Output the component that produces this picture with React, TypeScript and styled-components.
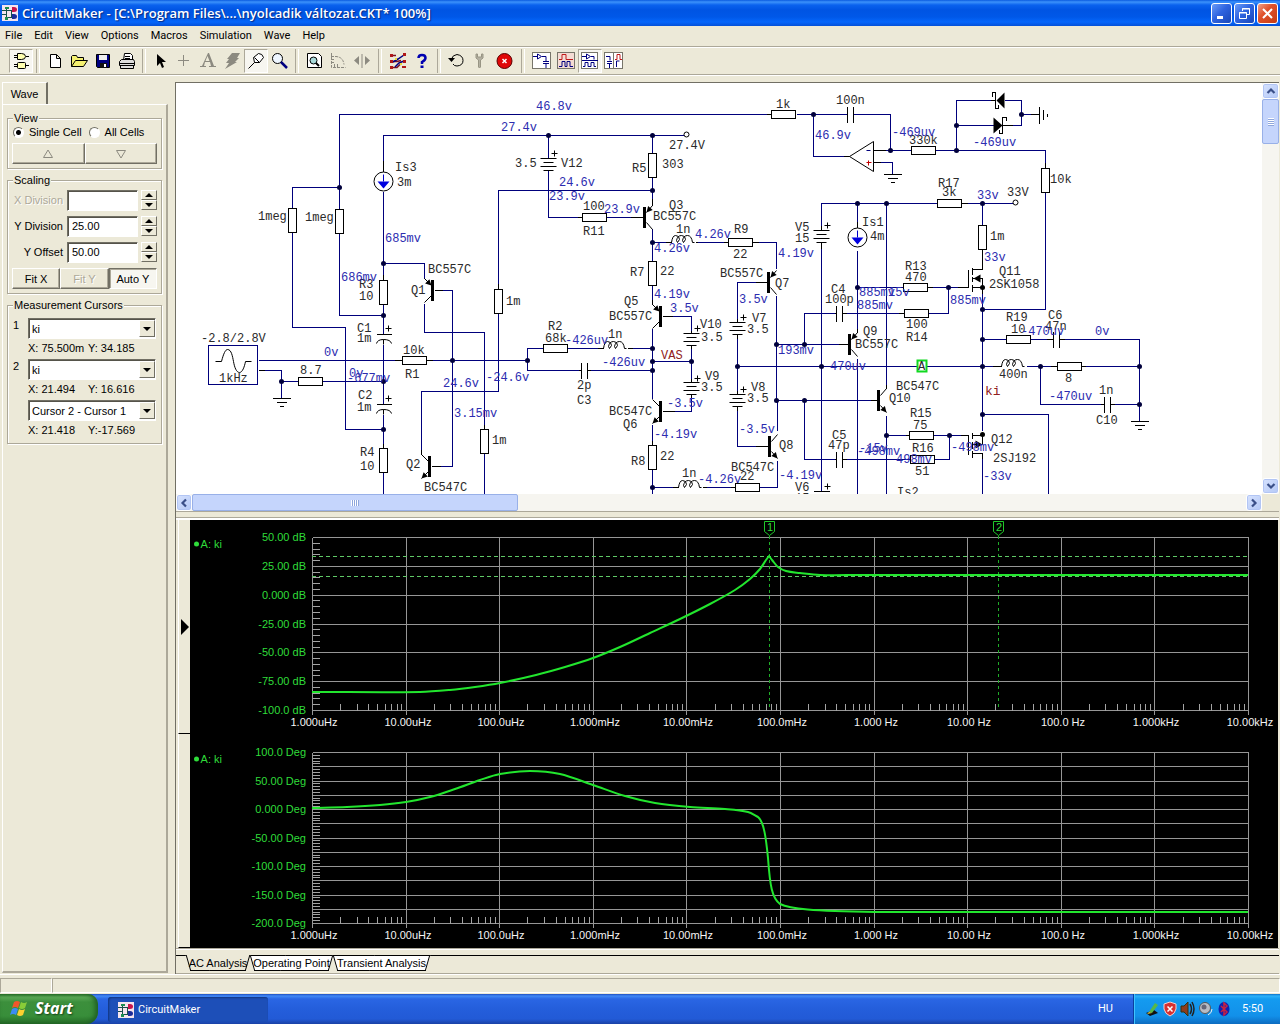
import React, { useState } from "react";
import styled, { createGlobalStyle } from "styled-components";

const ui = `"Liberation Sans", Arial, sans-serif`;
const menuFont = `Roboto, "Liberation Sans", sans-serif`;
const face = "#ece9d8";
const shade = "#aca899";
const dark = "#716f64";

const GlobalStyle = createGlobalStyle`
  * { box-sizing: border-box; }
  body { margin: 0; background: ${face}; font: 11px/14px ${ui}; color: #000; }
  button, input, select { font: inherit; color: inherit; margin: 0; }
  svg { display: block; }
`;

const Desktop = styled.div`
  display: flex;
  flex-direction: column;
  min-height: 100vh;
  background: ${face};
`;

/* ---------- title bar ---------- */

const TitleBar = styled.header`
  display: flex;
  align-items: center;
  gap: 4px;
  height: 26px;
  padding: 0 2px;
  background: linear-gradient(#0a5be0 0, #3c92fb 2px, #0a62ee 5px, #0054e3 10px, #0058e8 17px, #0566fb 22px, #0450d8 26px);
`;

const Title = styled.h1`
  flex: 1;
  margin: 0;
  font: 600 13px/20px "Open Sans", "Noto Sans", sans-serif;
  color: #fff;
  text-shadow: 1px 1px 1px #0a2a80;
  white-space: nowrap;
  overflow: hidden;
`;

const WindowButtons = styled.div`
  display: flex;
  gap: 2px;
`;

const WindowButton = styled.button<{ $close?: boolean }>`
  display: grid;
  place-items: center;
  width: 21px;
  height: 21px;
  padding: 0;
  border: 1px solid #fff;
  border-radius: 3px;
  background: ${(p) =>
    p.$close
      ? "linear-gradient(135deg, #f0a088, #e0512b 40%, #c53c14)"
      : "linear-gradient(135deg, #6a9cf8, #2f64e0 45%, #1846b8)"};
`;

/* ---------- menu and tool bar ---------- */

const MenuBar = styled.nav`
  display: flex;
  height: 20px;
  gap: 12px;
  padding: 0 5px;
`;

const MenuItem = styled.button`
  padding: 0;
  border: 0;
  background: none;
  font: 11px/18px ${menuFont};
`;

const ToolBar = styled.div`
  display: flex;
  align-items: center;
  height: 30px;
  padding-left: 9px;
  border-top: 1px solid ${shade};
  border-bottom: 1px solid #fff;
  box-shadow: inset 0 1px #fff, inset 0 -1px ${shade};
`;

const ToolButton = styled.button<{ $pressed?: boolean }>`
  width: 24px;
  height: 24px;
  padding: 0;
  border: 1px solid transparent;
  background: none;
  ${(p) => p.$pressed && `border-color: ${shade} #fff #fff ${shade}; background: #f7f6f0;`}
  svg { margin: -1px; }
`;

const ToolSeparator = styled.span<{ $space: number }>`
  display: flex;
  justify-content: center;
  width: ${(p) => p.$space}px;
  height: 24px;
  &::before {
    content: "";
    width: 2px;
    border-left: 1px solid ${shade};
    border-right: 1px solid #fff;
  }
`;

/* ---------- side panel ---------- */

const Main = styled.main`
  display: flex;
  flex: 1;
  gap: 7px;
  padding: 6px 1px 0 2px;
`;

const SidePanel = styled.aside`
  display: flex;
  flex-direction: column;
  flex: 0 0 166px;
  padding-bottom: 1px;
`;

const PanelTab = styled.button`
  align-self: flex-start;
  width: 46px;
  height: 22px;
  padding: 0;
  border: 0;
  border-top: 1px solid #fff;
  border-left: 1px solid #fff;
  border-right: 2px solid ${dark};
  background: ${face};
`;

const PanelBody = styled.div`
  flex: 1;
  padding: 6px 4px;
  border: 1px solid #fff;
  border-right: 2px solid ${shade};
  border-bottom: 2px solid ${shade};
`;

const Group = styled.fieldset`
  margin: 0 0 4px;
  padding: 0 4px 4px;
  border: 1px solid ${shade};
  box-shadow: 1px 1px #fff, inset 1px 1px #fff;
  min-width: 0;
`;

const Legend = styled.legend`
  margin-left: 1px;
  padding: 0 1px;
  background: ${face};
`;

const RadioRow = styled.div`
  display: flex;
  gap: 6px;
  height: 14px;
  margin-bottom: 4px;
  line-height: 12px;
`;

const RadioLabel = styled.label`
  display: flex;
  align-items: center;
  gap: 5px;
`;

const Radio = styled.input`
  appearance: none;
  width: 11px;
  height: 11px;
  margin-left: 1px;
  border: 1px solid;
  border-color: ${dark} #fff #fff ${dark};
  border-radius: 50%;
  background: #fff;
  &:checked { background: radial-gradient(#000 2px, #fff 3px); }
`;

const ButtonRow = styled.div`
  display: flex;
`;

const PushButton = styled.button<{ $down?: boolean }>`
  flex: 1;
  display: grid;
  place-items: center;
  height: 21px;
  padding: 0;
  border: 1px solid;
  border-color: ${(p) => (p.$down ? `${dark} #fff #fff ${dark}` : `#fff ${dark} ${dark} #fff`)};
  background: ${(p) => (p.$down ? "#f7f6f0" : face)};
  box-shadow: ${(p) => (p.$down ? `inset 1px 1px ${shade}` : `inset -1px -1px ${shade}`)};
  &:disabled { color: ${shade}; text-shadow: 1px 1px #fff; }
`;

const FieldRow = styled.div`
  display: grid;
  grid-template-columns: 1fr 71px 16px;
  column-gap: 3px;
  align-items: center;
  height: 22px;
  margin-bottom: 4px;
`;

const FieldLabel = styled.label<{ $off?: boolean }>`
  text-align: right;
  padding-right: 1px;
  white-space: nowrap;
  ${(p) => p.$off && `color: ${shade}; text-shadow: 1px 1px #fff;`}
`;

const NumberBox = styled.input`
  width: 100%;
  height: 21px;
  padding: 0 4px;
  border: 1px solid;
  border-color: ${dark} #fff #fff ${dark};
  box-shadow: inset 1px 1px #55534a;
  background: #fff;
`;

const Spinner = styled.div`
  display: flex;
  flex-direction: column;
`;

const SpinButton = styled.button`
  display: grid;
  place-items: center;
  height: 10px;
  padding: 0;
  border: 1px solid;
  border-color: #fff ${dark} ${dark} #fff;
  background: ${face};
`;

const Scaling = styled.div`
  padding-top: 2px;
  ${ButtonRow} { margin-top: 5px; }
`;

const CursorBlock = styled.div`
  display: grid;
  grid-template-columns: 15px 1fr;
  row-gap: 2px;
  padding: 6px 1px 0 1px;
  line-height: 14px;
`;

const Combo = styled.div`
  position: relative;
  height: 21px;
`;

const ComboSelect = styled.select`
  appearance: none;
  width: 100%;
  height: 21px;
  padding: 0 16px 0 3px;
  border: 1px solid;
  border-color: ${dark} #fff #fff ${dark};
  border-radius: 0;
  box-shadow: inset 1px 1px #55534a;
  background: #fff;
`;

const ComboArrow = styled.span`
  position: absolute;
  top: 2px;
  right: 1px;
  display: grid;
  place-items: center;
  width: 16px;
  height: 17px;
  border: 1px solid;
  border-color: #fff ${dark} ${dark} #fff;
  background: ${face};
  pointer-events: none;
`;

const Reading = styled.output`
  grid-column: 2;
  display: grid;
  grid-template-columns: 60px 1fr;
  margin-bottom: 2px;
  white-space: nowrap;
`;

/* ---------- work area ---------- */

const WorkArea = styled.section`
  display: flex;
  flex-direction: column;
  flex: 1;
  min-width: 0;
  border-left: 1px solid ${dark};
  border-top: 1px solid ${dark};
`;

const SchematicPane = styled.div`
  display: grid;
  grid-template-columns: minmax(0, 1fr) 17px;
  grid-template-rows: minmax(0, 1fr) 17px;
  flex: 1 1 0;
  min-height: 300px;
  background: ${face};
`;

const Sheet = styled.div`
  overflow: hidden;
  background: #fff;
  contain: size;
`;

const ScrollTrack = styled.div<{ $vertical?: boolean }>`
  display: flex;
  flex-direction: ${(p) => (p.$vertical ? "column" : "row")};
  background: #f6f5f0;
`;

const ScrollButton = styled.button`
  display: grid;
  place-items: center;
  flex: 0 0 16px;
  min-width: 16px;
  min-height: 16px;
  padding: 0;
  border: 1px solid #fff;
  border-radius: 3px;
  background: linear-gradient(135deg, #d6e2fe, #b4c8f6);
  box-shadow: inset 0 0 0 1px #b2c5f4;
`;

const ScrollThumb = styled.div<{ $size: string }>`
  display: grid;
  place-items: center;
  flex: 0 0 ${(p) => p.$size};
  border: 1px solid #98b0e8;
  border-radius: 2px;
  background: #c5d5fc;
`;

const ScrollSpace = styled.div`
  flex: 1;
`;

const Splitter = styled.div`
  height: 9px;
  border-top: 1px solid ${shade};
  border-bottom: 2px solid #fff;
  box-shadow: inset 0 -1px ${shade};
`;

const PlotPane = styled.div`
  display: flex;
  margin: 0 1px 0 2px;
  background: #000;
`;

const PlotGutter = styled.div`
  display: grid;
  grid-template-rows: 1fr 1fr;
  flex: 0 0 12px;
  background: ${face};
`;

const GutterCell = styled.div`
  display: grid;
  place-items: center;
  border-bottom: 1px solid #000;
  border-left: 1px solid #fff;
`;

const PlotView = styled.div`
  flex: 1;
  min-width: 0;
  svg { width: 100%; height: auto; }
`;

const SheetTabs = styled.div`
  display: flex;
  height: 26px;
  padding-top: 1px;
  border-bottom: 1px solid ${shade};
  background: linear-gradient(${shade} 1px, #fff 1px, #fff 2px, transparent 2px);
`;

const TabLine = styled.div`
  display: flex;
  flex: 1;
  margin-top: 6px;
  padding-left: 10px;
  border-top: 1px solid #000;
`;

const SheetTab = styled.button<{ $active?: boolean; $width: number }>`
  position: relative;
  width: ${(p) => p.$width}px;
  height: 16px;
  margin-top: -1px;
  padding: 0;
  border: 0;
  background: none;
  white-space: nowrap;
  z-index: ${(p) => (p.$active ? 2 : 1)};
  &::before, &::after {
    content: "";
    position: absolute;
    z-index: -1;
    top: 0;
    bottom: 0;
    border: 0 solid #000;
    border-bottom-width: 1px;
    border-top-width: ${(p) => (p.$active ? 0 : 1)}px;
    background: ${(p) => (p.$active ? face : "#fff")};
  }
  &::before {
    left: 2px;
    right: 40%;
    border-left-width: 1px;
    transform: skewX(16deg);
  }
  &::after {
    left: 40%;
    right: 2px;
    border-right-width: 1px;
    transform: skewX(-16deg);
  }
`;

const StatusBar = styled.footer`
  display: grid;
  grid-template-columns: 52px 1fr;
  height: 20px;
  padding: 3px 0 1px;
  border-top: 1px solid #fff;
`;

const StatusCell = styled.div`
  border: 1px solid;
  border-color: ${shade} #fff #fff ${shade};
`;

/* ---------- task bar ---------- */

const TaskBar = styled.div`
  display: flex;
  align-items: stretch;
  height: 30px;
  background: linear-gradient(#1f4fc0 0, #4189f5 2px, #2a66e4 5px, #245edb 15px, #225ad6 25px, #1941a5 30px);
  color: #fff;
  font: 11px/14px ${menuFont};
`;

const StartButton = styled.button`
  display: flex;
  align-items: center;
  gap: 5px;
  width: 98px;
  padding: 0 0 2px 10px;
  border: 0;
  border-radius: 0 10px 12px 0;
  background: linear-gradient(#2c7a2c 0, #5dac58 3px, #3c8f3c 8px, #388e3a 22px, #256b27 30px);
  box-shadow: inset -3px 0 5px #1f5f22;
  color: #fff;
  font: italic 700 16px/24px "Open Sans", "Noto Sans", sans-serif;
  text-shadow: 1px 1px 2px #123f14;
`;

const TaskButton = styled.button`
  display: flex;
  align-items: center;
  gap: 4px;
  width: 160px;
  height: 25px;
  margin: 3px 0 0 10px;
  padding: 0 10px;
  border: 0;
  border-radius: 3px;
  background: #1d4fb8;
  box-shadow: inset 1px 1px 2px #123580;
  color: #fff;
`;

const Language = styled.span`
  margin: 8px 20px 0 auto;
`;

const Tray = styled.div`
  display: flex;
  align-items: center;
  gap: 2px;
  width: 147px;
  padding-left: 10px;
  border-left: 1px solid #0b3f9f;
  background: linear-gradient(#0e70c8 0, #2cb2fa 2px, #149bf0 5px, #1290e9 22px, #0d6cc0 30px);
  box-shadow: inset 1px 0 #3fc4ff;
`;

const Clock = styled.time`
  margin-left: 8px;
`;

/* ---------- schematic drawing ---------- */

type P = [number, number];

const WIRES = `
M339 209V114H766 M292 208V187H339 M292 232V327H345V429H383 M339 233V315H383
M383 160V135H683 M383 191V274 M383 304V334 M383 344V404 M383 414V443 M383 472V494
M383 263H424V278 M424 303V332H484V424 M484 453V494 M442 290H452V466H440
M421 449V391H498V313 M498 283V190H652 M258 360H394 M432 360H527 M264 370H281V397 M281 381H298 M322 381H383
M652 135V153 M652 177V198 M652 228V261 M652 285V299 M652 328V398 M652 424V440 M652 469V494
M548 135V158 M548 170V217H577 M606 217H630
M652 242H665 M697 242H723 M758 242H776V268 M776 295V400 M777 400V430 M777 460V487H759
M755 282H737V318 M737 338V390 M737 410V446H755
M672 316H691V330 M691 348V378 M691 398V411H674 M652 361H691
M543 348H527V370H578 M567 348H597 M632 348H652 M590 370H652 M652 487H672 M706 487H730
M796 114H847 M853 114H890V150 M813 114V156H843 M885 150H911 M935 150H1045V162 M1045 192V309H982
M880 162H892V174 M956 150V100H990 M1004 100H1021V125H1012 M956 125H993 M1021 114H1030
M821 225V203H937 M967 203H1012 M821 248V491 M857 203V221 M857 250V328 M857 358V494
M886 203V384 M886 415V494 M857 287H903 M932 287H957 M948 287V313H928
M804 344V313H834 M846 313H898 M776 344H838 M737 366H992 M1026 366H1050 M1085 366H1139
M776 400H870 M804 400V459H834 M846 459H910 M934 459H949V435 M886 435H905 M933 435H960
M982 203V225 M982 293V430 M982 458V494 M982 414H1048V494
M982 339H1006 M1030 339H1046 M1064 339H1139V421 M1040 366V404H1100 M1114 404H1139`;

const LEADS = `
M766 114H771 M383 160V171 M383 274V280 M383 443V448 M484 424V429 M434 290H442 M431 466H440 M421 449V454
M498 283V289 M394 360H402 M426 360H432 M258 370H264 M652 198V205 M577 217H582 M630 217H643
M665 242H671 M695 242H697 M723 242H728 M752 242H758 M755 282H767 M755 446H768 M737 318V322 M737 334V338 M737 390V394 M737 406V410
M662 316H672 M662 411H674 M691 330V333 M691 345V348 M691 378V382 M691 394V398 M652 299V304 M652 440V445
M597 348H603 M627 348H632 M578 370H581 M587 370H590 M672 487H678 M702 487H706 M730 487H735
M843 156H849 M873 150H885 M873 162H880 M1045 162V168 M990 100H995 M1002 125H1012 M1030 114H1039
M821 225V230 M821 242V248 M857 221V227 M961 203H967 M857 328V332 M886 384V388 M927 287H932 M957 287H968
M834 313H836 M842 313H846 M898 313H904 M838 344H848 M992 366H1001 M1050 366H1057 M1081 366H1085
M870 400H877 M834 459H836 M842 459H846 M905 435H909 M960 435H968 M982 249V269H972 M982 287V293
M1046 339H1053 M1059 339H1064 M1100 404H1104 M1110 404H1114
M272 398H290 M276 402H286 M279 406H283 M883 174H901 M887 178H897 M890 182H894
M1130 421H1148 M1134 425H1144 M1137 429H1141 M1039 106V123 M1043 109V119 M1047 113V116
M376 334H391 M376 404H391 M581 362V378 M587 362V378 M847 106V122 M853 106V122
M836 305V321 M842 305V321 M836 451V467 M842 451V467 M1053 331V347 M1059 331V347 M1104 396V412 M1110 396V412
M813 491H829
M968 269V287 M972 267V274 M972 276V281 M972 284V291 M972 278H982V287H972
M968 435V454 M972 432V438 M972 441V448 M972 450V457 M972 435H982V444H972 M972 453H982V458
M992 96V92H995V108H998V104 M1006 120V117H1002V133H999V129`;

const V_RESISTORS: P[] = [
  [292, 208], [339, 209], [383, 280], [383, 448], [484, 429], [498, 289], [652, 153],
  [652, 261], [652, 445], [1045, 168], [982, 225],
];

const H_RESISTORS: P[] = [
  [402, 360], [298, 381], [582, 217], [728, 242], [543, 348], [735, 487], [771, 114],
  [911, 150], [937, 203], [903, 287], [904, 313], [1006, 339], [1057, 366], [909, 435], [910, 459],
];

const DOTS: P[] = [
  [339, 187], [383, 263], [383, 315], [383, 381], [383, 429], [281, 381], [452, 360], [527, 360],
  [548, 135], [652, 135], [652, 190], [652, 242], [652, 348], [652, 361], [652, 370], [652, 487],
  [691, 361], [737, 366], [776, 344], [776, 400], [804, 344], [804, 400], [821, 366], [813, 114],
  [890, 150], [956, 125], [956, 150], [1021, 114], [857, 203], [886, 203], [982, 203], [857, 287],
  [948, 287], [982, 309], [982, 339], [982, 366], [982, 414], [1040, 366], [1139, 366], [1139, 404],
  [886, 435], [949, 435],
];

const PLUSES: P[] = [
  [388, 328], [388, 398], [554, 153], [697, 328], [697, 378], [743, 317], [743, 389], [827, 225], [827, 486],
];

const BATTERIES: P[] = [[548, 158], [691, 333], [691, 382], [737, 322], [737, 394], [821, 230]];
const COILS: P[] = [[671, 242], [603, 348], [678, 487], [1001, 366]];

const TRANSISTORS: { x: number; y: number; out: number; pnp?: boolean }[] = [
  { x: 431, y: 280, out: 424, pnp: true },
  { x: 428, y: 456, out: 421 },
  { x: 643, y: 207, out: 652, pnp: true },
  { x: 659, y: 306, out: 652, pnp: true },
  { x: 659, y: 401, out: 652 },
  { x: 767, y: 272, out: 776, pnp: true },
  { x: 768, y: 436, out: 777 },
  { x: 848, y: 334, out: 857, pnp: true },
  { x: 877, y: 390, out: 886 },
];

type Label = [string, number, number];

const VOLTAGES: Label[] = [
  ["46.8v", 536, 110], ["27.4v", 501, 131], ["685mv", 385, 242], ["686mv", 341, 281], ["24.6v", 559, 186],
  ["23.9v", 549, 200], ["23.9v", 604, 213], ["4.26v", 654, 252], ["4.26v", 695, 238], ["4.19v", 778, 257],
  ["4.19v", 654, 298], ["3.5v", 739, 303], ["3.5v", 670, 312], ["-426uv", 565, 344], ["-426uv", 602, 366],
  ["-3.5v", 667, 407], ["-4.19v", 654, 438], ["-4.26v", 698, 483], ["-3.5v", 739, 433], ["0v", 324, 356],
  ["0v", 349, 377], ["-677mv", 347, 382], ["24.6v", 443, 387], ["-24.6v", 486, 381], ["3.15mv", 454, 417],
  ["-4.19v", 779, 479], ["193mv", 778, 354], ["46.9v", 815, 139], ["-469uv", 892, 136], ["-469uv", 973, 146],
  ["33v", 977, 199], ["33v", 984, 261], ["885mv", 859, 296], ["15v", 888, 296], ["885mv", 857, 309],
  ["885mv", 950, 304], ["470uv", 830, 370], ["-470uv", 1021, 335], ["0v", 1095, 335], ["-470uv", 1049, 400],
  ["-15v", 859, 452], ["-498mv", 857, 455], ["498mv", 896, 463], ["-498mv", 951, 451], ["-33v", 983, 480],
];

const PARTS: Label[] = [
  ["Is3", 395, 171], ["3m", 397, 186], ["1meg", 258, 220], ["1meg", 305, 221], ["R3", 359, 288], ["10", 359, 300],
  ["BC557C", 428, 273], ["Q1", 411, 294], ["1m", 506, 305], ["C1", 357, 332], ["1m", 357, 342],
  ["-2.8/2.8V", 201, 342], ["1kHz", 219, 382], ["8.7", 300, 374], ["10k", 403, 354], ["R1", 405, 378],
  ["C2", 358, 399], ["1m", 357, 411], ["R4", 360, 456], ["10", 360, 470], ["Q2", 406, 468], ["BC547C", 424, 491],
  ["1m", 492, 444], ["3.5", 515, 167], ["V12", 561, 167], ["27.4V", 669, 149], ["R5", 632, 172], ["303", 662, 168],
  ["100", 583, 210], ["R11", 583, 235], ["Q3", 669, 209], ["BC557C", 653, 220], ["1n", 676, 233], ["R9", 734, 233],
  ["22", 733, 258], ["R7", 630, 276], ["22", 660, 275], ["BC557C", 720, 277], ["Q7", 775, 287], ["Q5", 624, 305],
  ["BC557C", 609, 320], ["V10", 700, 328], ["3.5", 701, 341], ["V7", 752, 322], ["3.5", 747, 333], ["R2", 548, 330],
  ["68k", 545, 342], ["1n", 608, 338], ["2p", 577, 389], ["C3", 577, 404], ["V9", 705, 380], ["3.5", 701, 391],
  ["V8", 751, 391], ["3.5", 747, 402], ["BC547C", 609, 415], ["Q6", 623, 428], ["R8", 631, 465], ["22", 660, 460],
  ["Q8", 779, 449], ["BC547C", 731, 471], ["22", 740, 480], ["1n", 682, 477], ["1k", 776, 108], ["100n", 836, 104],
  ["330k", 909, 144], ["R17", 938, 187], ["3k", 942, 196], ["33V", 1007, 196], ["V5", 795, 231], ["15", 795, 242],
  ["Is1", 862, 226], ["4m", 870, 240], ["R13", 905, 270], ["470", 905, 281], ["1m", 990, 240], ["Q11", 999, 275],
  ["2SK1058", 989, 288], ["C4", 831, 293], ["100p", 825, 303], ["Q9", 863, 335], ["BC557C", 855, 348],
  ["100", 906, 328], ["R14", 906, 341], ["400n", 999, 378], ["R19", 1006, 321], ["10", 1011, 333], ["C6", 1048, 319],
  ["47n", 1045, 330], ["8", 1065, 382], ["BC547C", 896, 390], ["Q10", 889, 402], ["R15", 910, 417], ["75", 913, 429],
  ["R16", 912, 452], ["51", 915, 475], ["C5", 832, 439], ["47p", 828, 449], ["Q12", 991, 443], ["2SJ192", 993, 462],
  ["1n", 1099, 394], ["C10", 1096, 424], ["10k", 1050, 183], ["V6", 795, 491], ["15", 795, 502], ["Is2", 897, 496],
];

const SheetText = styled.text<{ $tone: string; $big?: boolean }>`
  font-family: "Liberation Mono", "Courier New", monospace;
  font-size: ${(p) => (p.$big ? 13 : 12)}px;
  fill: ${(p) => p.$tone};
`;

function arrowHead(from: P, to: P) {
  const dx = to[0] - from[0];
  const dy = to[1] - from[1];
  const len = Math.hypot(dx, dy);
  const ux = dx / len;
  const uy = dy / len;
  const bx = to[0] - ux * 6;
  const by = to[1] - uy * 6;
  return `${to[0]},${to[1]} ${bx - uy * 3},${by + ux * 3} ${bx + uy * 3},${by - ux * 3}`;
}

function Transistor({ x, y, out, pnp }: { x: number; y: number; out: number; pnp?: boolean }) {
  const edge = out < x ? x : x + 3;
  const top: P = [out, y - 2];
  const bottom: P = [out, y + 22];
  return (
    <g stroke="#000" fill="#000">
      <path d={`M${top} L${edge} ${y + 5} M${edge} ${y + 15} L${bottom}`} />
      <rect x={x} y={y} width="2" height="20" />
      <polygon stroke="none" points={pnp ? arrowHead(top, [edge, y + 5]) : arrowHead([edge, y + 15], bottom)} />
    </g>
  );
}

function CurrentSource({ x, y }: { x: number; y: number }) {
  return (
    <g>
      <circle cx={x} cy={y} r="9.5" fill="#fff" stroke="#000" />
      <path d={`M${x} ${y - 7}V${y}`} stroke="#0000c8" />
      <path d={`M${x - 6} ${y}H${x + 6}L${x} ${y + 7}Z`} fill="#0000e0" />
    </g>
  );
}

function Schematic() {
  return (
    <svg width="1086" height="411" viewBox="176 83 1086 411" role="img" aria-label="Amplifier schematic">
      <g transform="translate(.5 .5)" fill="none" strokeWidth="1">
        <path d={WIRES} stroke="#00007c" shapeRendering="crispEdges" />
        <path d={LEADS} stroke="#000" shapeRendering="crispEdges" />
        <g fill="#fff" stroke="#000">
          {V_RESISTORS.map(([x, y]) => <rect key={`${x}-${y}`} x={x - 4} y={y} width="8" height="24" />)}
          {H_RESISTORS.map(([x, y]) => <rect key={`${x}-${y}`} x={x} y={y - 4} width="24" height="8" />)}
          <rect x="208" y="345" width="49" height="39" stroke="#00007c" />
          <path d="M849 156L873 141V171Z" />
          <circle cx="686" cy="134" r="2.5" />
          <circle cx="1015" cy="202" r="2.5" />
        </g>
        <g stroke="#000">
          <path d="M215 361H221C223 353 225 349 227 349C231 349 232 356 233 361C234 367 236 372 239 372C242 372 244 366 245 361H251" />
          <path d="M376 343Q377 339 383 339Q390 339 391 343M376 413Q377 409 383 409Q390 409 391 413M383 339V344M383 409V414" />
          {BATTERIES.map(([x, y]) => (
            <path key={`${x}-${y}`} d={`M${x - 8} ${y}H${x + 8}M${x - 5} ${y + 4}H${x + 5}M${x - 8} ${y + 8}H${x + 8}M${x - 5} ${y + 12}H${x + 5}`} />
          ))}
          {PLUSES.map(([x, y]) => <path key={`${x}-${y}`} d={`M${x - 3} ${y}H${x + 3}M${x} ${y - 3}V${y + 3}`} />)}
          {COILS.map(([x, y]) => (
            <path
              key={`${x}-${y}`}
              d={`M${x} ${y}q1-7 4-7q4 0 4 4l-2 3l-1-2q1-5 5-5q4 0 4 4l-2 3l-1-2q1-5 5-5q4 0 5 7h2`}
            />
          ))}
        </g>
        {TRANSISTORS.map((t) => <Transistor key={`${t.x}-${t.y}`} {...t} />)}
        <CurrentSource x={383} y={181} />
        <CurrentSource x={857} y={237} />
        <g fill="#000">
          <path d="M996 100L1004 92V108Z M1002 125L993 117V133Z M973 278L980 274V282Z M982 444L975 440V448Z" />
          <circle cx="982" cy="287" r="2.5" />
          <circle cx="982" cy="434" r="2.5" />
        </g>
        <path d="M866 150H870" stroke="#00007c" />
        <path d="M866 162H871M868 160V165" stroke="#c00000" />
        <g fill="#00003c">
          {DOTS.map(([x, y]) => <circle key={`${x}-${y}`} cx={x} cy={y} r="2.5" />)}
        </g>
        <rect x="917" y="360" width="9" height="11" fill="#fff" stroke="#10d820" strokeWidth="2" />
      </g>
      {PARTS.map(([t, x, y]) => <SheetText key={`${x}-${y}`} x={x} y={y} $tone="#2a2a2a">{t}</SheetText>)}
      {VOLTAGES.map(([t, x, y]) => <SheetText key={`${x}-${y}`} x={x} y={y} $tone="#2c2cb0">{t}</SheetText>)}
      <SheetText x={918} y={370} $tone="#2a2a2a">A</SheetText>
      <SheetText x={661} y={359} $tone="#902020">VAS</SheetText>
      <SheetText x={985} y={395} $tone="#902020" $big>ki</SheetText>
    </svg>
  );
}

/* ---------- wave plots ---------- */

const FREQUENCIES = [
  "1.000uHz", "10.00uHz", "100.0uHz", "1.000mHz", "10.00mHz", "100.0mHz",
  "1.000 Hz", "10.00 Hz", "100.0 Hz", "1.000kHz", "10.00kHz",
];

const LEFT = 312;
const DECADE = 93.6;

const PlotText = styled.text<{ $green?: boolean }>`
  font: 11px ${ui};
  fill: ${(p) => (p.$green ? "#2fdc3a" : "#f4f4f4")};
  text-anchor: ${(p) => (p.$green ? "end" : "middle")};
`;

interface GridProps {
  top: number;
  bottom: number;
  rows: number;
  labels: string[];
}

function PlotGrid({ top, bottom, rows, labels }: GridProps) {
  const step = (bottom - top) / rows;
  const labelStep = (bottom - top) / (labels.length - 1);
  let grid = "";
  let ticks = "";
  for (let i = 0; i <= rows; i++) {
    grid += `M${LEFT} ${Math.round(top + i * step)}H1248`;
    for (let k = 1; k < 5 && i < rows; k++) ticks += `M${LEFT} ${Math.round(top + (i + k / 5) * step)}h7`;
  }
  FREQUENCIES.forEach((_, i) => {
    const x = LEFT + i * DECADE;
    grid += `M${Math.round(x)} ${top}V${bottom + 4}`;
    for (let k = 2; k < 10 && i < 10; k++) ticks += `M${Math.round(x + Math.log10(k) * DECADE)} ${bottom}v-7`;
  });
  return (
    <>
      <g transform="translate(.5 .5)" shapeRendering="crispEdges" fill="none">
        <path d={grid} stroke="#969696" />
        <path d={ticks} stroke="#a4a4a4" />
      </g>
      {labels.map((t, i) => (
        <PlotText key={t} $green x="306" y={Math.round(top + i * labelStep) + 4}>{t}</PlotText>
      ))}
      {FREQUENCIES.map((t, i) => (
        <PlotText key={t} x={Math.round(LEFT + i * DECADE) + 2} y={bottom + 16}>{t}</PlotText>
      ))}
      <circle cx="196.500" cy={top + 7} r="2.5" fill="#2fdc3a" />
      <PlotText $green x="222" y={top + 11}>A: ki</PlotText>
    </>
  );
}

function CursorFlag({ x, name }: { x: number; name: string }) {
  return (
    <g>
      <path d={`M${x - 4.5} 521.500h10v10l-5 4l-5-4z`} fill="none" stroke="#1fc82a" />
      <path d={`M${x + 0.5} 536V710`} stroke="#1fae28" strokeDasharray="3 3" />
      <PlotText $green x={x + 4} y="531">{name}</PlotText>
    </g>
  );
}

/* Cubic segments through the points; the caller supplies the first move. */
function smooth(points: P[]) {
  let d = "";
  for (let i = 0; i < points.length - 1; i++) {
    const a = points[Math.max(0, i - 1)];
    const b = points[i];
    const c = points[i + 1];
    const e = points[Math.min(points.length - 1, i + 2)];
    const span = c[0] - b[0];
    const m1 = ((c[1] - a[1]) / (c[0] - a[0])) * span;
    const m2 = ((e[1] - b[1]) / (e[0] - b[0])) * span;
    d += `C${b[0] + span / 3} ${b[1] + m1 / 3} ${c[0] - span / 3} ${c[1] - m2 / 3} ${c[0]} ${c[1]}`;
  }
  return d;
}

const GAIN: P[] = [
  [312, 692], [420, 692], [450, 690], [475, 687], [500, 683], [536, 675], [565, 667], [593, 658], [620, 647],
  [650, 633], [680, 619], [710, 604], [735, 590], [750, 579], [760, 569], [766, 560],
];
const GAIN_TAIL: P[] = [[772, 560], [778, 567], [786, 571], [800, 573], [820, 575], [860, 575], [1248, 575]];
const PHASE: P[] = [
  [312, 808], [347, 807], [380, 805], [406, 802], [430, 797], [455, 789], [480, 780], [500, 774], [530, 771],
  [560, 774], [593, 785], [625, 796], [655, 803], [690, 807], [725, 809], [748, 812], [758, 817],
];

function Plots() {
  return (
    <svg viewBox="190 520 1088 428" role="img" aria-label="AC analysis of node ki">
      <PlotGrid top={537} bottom={710} rows={6}
        labels={["50.00 dB", "25.00 dB", "0.000 dB", "-25.00 dB", "-50.00 dB", "-75.00 dB", "-100.0 dB"]} />
      <PlotGrid top={752} bottom={923} rows={12}
        labels={["100.0 Deg", "50.00 Deg", "0.000 Deg", "-50.00 Deg", "-100.0 Deg", "-150.0 Deg", "-200.0 Deg"]} />
      <path d="M312 556.500H1248M312 576.500H1248" stroke="#5fc866" strokeDasharray="4 3" />
      <CursorFlag x={769} name="1" />
      <CursorFlag x={998} name="2" />
      <g fill="none" stroke="#22e62e" strokeWidth="2" strokeLinejoin="round">
        <path d={`M312 692${smooth(GAIN)}L769 556L772 560${smooth(GAIN_TAIL)}`} />
        <path d={`M312 808${smooth(PHASE)}C764 822 766 838 768 858C770 886 772 898 780 904C790 909 812 911 875 912H1248`} />
      </g>
    </svg>
  );
}

/* ---------- icons ---------- */

const ink = "#000";
const navy = "#000080";
const gray = "#8c8a80";

const ICONS: Record<string, React.ReactNode> = {
  parts: (
    <g fill="#ffffb0" stroke={ink}>
      <path d="M8.500 4.500h4q4 0 4 3t-4 3h-4zM5 6.500h3M5 8.500h3M17 7.500h3" />
      <rect x="8.500" y="13.500" width="8" height="6" rx="1" />
      <path d="M5 15.500h3M5 17.500h3M17 16.500h3" />
    </g>
  ),
  new: <path d="M7.500 5.500h6l4 4v9h-10zM13.500 5.500v4h4" fill="#fff" stroke={ink} />,
  open: (
    <g fill="#f4f070" stroke={ink}>
      <path d="M4.500 17.500v-10l1-1h4l1 2h6v3" />
      <path d="M4.500 17.500l4-6h12l-4 6z" />
    </g>
  ),
  save: (
    <g>
      <path d="M5.500 5.500h13v13h-12l-1-1z" fill={navy} stroke={ink} />
      <path d="M8 6h8v5H8z" fill="#eee" />
      <path d="M9 14h7v5H9z" fill="#111" />
      <path d="M13 15h2v3h-2z" fill="#fff" />
    </g>
  ),
  print: (
    <g fill="#fff" stroke={ink}>
      <path d="M8.500 11.500l1-7h6l2 2v5z" />
      <path d="M4.500 12.500l2-2h12l1 2v4h-15zM5.500 16.500h13v3h-13z" fill="#ddd" />
      <path d="M10 7.500h5M10 9.500h5M5 14.500h14" />
    </g>
  ),
  pointer: <path d="M9 5v12l3-3 2 5 2-1-2-5h4z" fill={ink} />,
  wire: <path d="M11.500 6v11M6 11.500h11" stroke={gray} />,
  text: <path d="M12 4h1l5 13h2v1h-7v-1h2l-1-4H9l-1 4h2v1H4v-1h2zM9.500 12h4l-2-5z" fill={gray} />,
  cut: <path d="M12 4h8l-3 5h2l-4 4h2L5 20l4-6H6l3-4H7z" fill={gray} />,
  probe: <path d="M4.500 19.500l6-6-1-5 5-4q4 0 5 4l-4 5-5 0M10.500 8.500l5 5" fill="#fff" stroke={ink} />,
  zoom: (
    <g fill="none">
      <circle cx="9.500" cy="9.500" r="5" fill="#eef6ff" stroke={ink} />
      <path d="M13 13l6 6" stroke={navy} strokeWidth="2.500" />
    </g>
  ),
  fit: (
    <g fill="none" stroke={ink}>
      <path d="M5.500 4.500h11l3 3v11h-14z" fill="#fff" />
      <circle cx="11.500" cy="11.500" r="3.500" fill="#a8dada" />
      <path d="M14 14l3 3" strokeWidth="2" />
    </g>
  ),
  rotate: <path d="M5.500 4v14.500h14M5 7.500h6M5 10.500h3M5 13.500h3M8.500 18v-3M11.500 18v-3M9 7.500q8 0 9 8" fill="none" stroke={gray} strokeDasharray="3 1" />,
  flip: <path d="M9 7v9l-5-4.500zM15 7v9l5-4.500zM11.500 5h1v14h-1z" fill={gray} />,
  options: (
    <g fill="none">
      <path d="M5 6.500h5M5 12.500h6l4-1M5 18.500h6l3-3" stroke="#7c1020" strokeWidth="1.500" />
      <path d="M7 13l5-3 6-4M9 18l4-4 5-2" stroke={navy} strokeWidth="1.500" />
      <path d="M4 5h3v3H4zM4 11h3v3H4zM4 17h3v3H4zM17 4h3v3h-3zM17 11h3v3h-3zM16 17h4v2h-4z" fill="#b01818" />
      <path d="M9 9h2v2H9zM14 14h2v2h-2z" fill="#e8d838" />
    </g>
  ),
  help: (
    <g>
      <path d="M8.500 9q0-3 3.500-3t3.500 3q0 2-3.500 4v2" fill="none" stroke="#0000b0" strokeWidth="2.500" />
      <path d="M10.500 16.500h3v2.500h-3z" fill="#0000b0" />
    </g>
  ),
  reset: (
    <g>
      <path d="M7.500 10q1-4 5.500-4.500q6 1 6 6t-6 5.500q-3 0-4-2" fill="none" stroke={ink} />
      <path d="M4 9h7l-3.500 4z" fill={ink} />
    </g>
  ),
  wrench: <path d="M8 5v4l2.500 2v7q1 2 2 0v-7L15 9V5h-1.500v3h-4V5z" fill="#b4b1a2" stroke="#989584" />,
  stop: (
    <g>
      <circle cx="12.500" cy="12" r="7.500" fill="#e00808" stroke="#5a0000" />
      <path d="M10.500 10l4 4M14.500 10l-4 4" stroke="#fff" strokeWidth="1.500" />
    </g>
  ),
  schematic: (
    <g fill="#fff" stroke={navy}>
      <rect x="2.500" y="3.500" width="18" height="16" stroke="#77756a" />
      <path d="M3 7.500h4M7.500 5v5l4-2.500zM12 7.500h4v5M13 12.500h6M13 14.500h6M16 15v4" fill="none" />
    </g>
  ),
  waves: (
    <g fill="none">
      <rect x="3.500" y="3.500" width="17" height="16" fill="#f4dcd4" stroke="#77756a" />
      <path d="M5 10.500h3v-5h4v5h7" stroke="#c01818" />
      <path d="M5 17.500h3v-5h3v5h2v-5h3v5h3" stroke={navy} />
    </g>
  ),
  both: (
    <g fill="none" stroke={navy}>
      <rect x="3.500" y="3.500" width="16" height="16" fill="#fff" stroke="#77756a" />
      <path d="M4 7.500h4M8.500 5v5l4-2.500zM13 7.500h3v3M4 11.500h16M5 17.500h2v-4h3v4h3v-4h3v4h2" />
    </g>
  ),
  side: (
    <g fill="none">
      <rect x="2.500" y="3.500" width="18" height="16" fill="#fff" stroke="#77756a" />
      <path d="M4 7.500h4v4M5 12.500h5M5 14.500h5M7.500 15v4M14.500 18v-6h3" stroke={navy} />
      <path d="M11.500 4v16" stroke="#77756a" />
      <path d="M13 10.500h2v-5h3v5h2" stroke="#c01818" />
    </g>
  ),
};

function AppIcon() {
  return (
    <svg width="16" height="16" viewBox="0 0 16 16">
      <path d="M0 0h16v16H0z" fill="#f4e4ee" />
      <path d="M0 5.500h4M0 9.500h4M4.500 3v10M4 5.500h7M4 12.500h7M9.500 5v7" stroke="#185048" fill="none" />
      <path d="M10 2h2q3 0 3 2.500T12 7h-2z" fill="#c8144c" />
      <path d="M10 9h2q3 0 3 2.500T12 14h-2z" fill="#1c2c98" />
      <path d="M3 2h4v2H3zM3 12h3v3H3z" fill="#1c8c50" />
    </svg>
  );
}

function WindowsFlag() {
  return (
    <svg width="20" height="18" viewBox="0 0 20 18">
      <path d="M4 3q3-2 6 0l-2 6q-3-2-6 0z" fill="#f0562c" />
      <path d="M11 3q3 2 6 0l-2 6q-3 2-6 0z" fill="#88cc38" />
      <path d="M2 10q3-2 6 0l-2 6q-3-2-6 0z" fill="#3c8cf4" />
      <path d="M9 10q3 2 6 0l-2 6q-3 2-6 0z" fill="#fcd030" />
    </svg>
  );
}

const CellArrow = ({ up }: { up?: boolean }) => (
  <svg width="12" height="12" viewBox="0 0 12 12">
    <path d={up ? "M1.500 9.500L6 2L10.500 9.500Z" : "M1.500 2.500L6 10L10.500 2.500Z"} fill="none" stroke="#8c8a80" />
  </svg>
);

const SmallArrow = ({ up }: { up?: boolean }) => (
  <svg width="8" height="4" viewBox="0 0 8 4">
    <path d={up ? "M0 4h8L4 0z" : "M0 0h8L4 4z"} fill="#000" />
  </svg>
);

const Chevron = ({ turn }: { turn: number }) => (
  <svg width="10" height="10" viewBox="-5 -5 10 10">
    <path d="M-3.500 2L0-1.500L3.500 2" transform={`rotate(${turn})`} fill="none" stroke="#3a4f88" strokeWidth="2.200" />
  </svg>
);

const Grip = ({ turn = 0 }: { turn?: number }) => (
  <svg width="8" height="8" viewBox="-4 -4 8 8">
    <g transform={`rotate(${turn})`} shapeRendering="crispEdges">
      <path d="M-3.500 -3V3M-1.500 -3V3M.5 -3V3M2.500 -3V3" stroke="#fff" />
      <path d="M-2.500 -3V3M-.5 -3V3M1.500 -3V3M3.500 -3V3" stroke="#8ea6dc" />
    </g>
  </svg>
);

/* ---------- page ---------- */

interface Tool {
  icon: string;
  label: string;
  pressed?: boolean;
}

const TOOL_GROUPS: { space: number; tools: Tool[] }[] = [
  { space: 10, tools: [{ icon: "parts", label: "Parts", pressed: true }] },
  {
    space: 9,
    tools: [
      { icon: "new", label: "New" }, { icon: "open", label: "Open" },
      { icon: "save", label: "Save" }, { icon: "print", label: "Print" },
    ],
  },
  {
    space: 10,
    tools: [
      { icon: "pointer", label: "Select" }, { icon: "wire", label: "Wire" }, { icon: "text", label: "Text" },
      { icon: "cut", label: "Delete" }, { icon: "probe", label: "Probe", pressed: true }, { icon: "zoom", label: "Zoom" },
    ],
  },
  {
    space: 12,
    tools: [{ icon: "fit", label: "Fit" }, { icon: "rotate", label: "Rotate" }, { icon: "flip", label: "Mirror" }],
  },
  { space: 10, tools: [{ icon: "options", label: "Setup" }, { icon: "help", label: "Help" }] },
  {
    space: 14,
    tools: [{ icon: "reset", label: "Reset" }, { icon: "wrench", label: "Step" }, { icon: "stop", label: "Stop" }],
  },
  {
    space: 0,
    tools: [
      { icon: "schematic", label: "Schematic" }, { icon: "waves", label: "Waveforms" },
      { icon: "both", label: "Split horizontally", pressed: true }, { icon: "side", label: "Split vertically" },
    ],
  },
];

const MENUS = ["File", "Edit", "View", "Options", "Macros", "Simulation", "Wave", "Help"];

function ScaleField({ id, label, value, off }: { id: string; label: string; value: string; off?: boolean }) {
  return (
    <FieldRow>
      <FieldLabel htmlFor={id} $off={off}>{label}</FieldLabel>
      <NumberBox id={id} defaultValue={value} disabled={off} />
      <Spinner>
        <SpinButton aria-label={`${label} up`}><SmallArrow up /></SpinButton>
        <SpinButton aria-label={`${label} down`}><SmallArrow /></SpinButton>
      </Spinner>
    </FieldRow>
  );
}

function CursorField({ id, mark, value, x, y }: { id: string; mark: string; value: string; x: string; y: string }) {
  return (
    <>
      <label htmlFor={id}>{mark}</label>
      <Combo>
        <ComboSelect id={id} aria-label={mark ? undefined : "Difference"}><option>{value}</option></ComboSelect>
        <ComboArrow><SmallArrow /></ComboArrow>
      </Combo>
      <Reading htmlFor={id}><span>X: {x}</span><span>Y:{y}</span></Reading>
    </>
  );
}

function WavePanel() {
  const [cell, setCell] = useState("single");
  return (
    <SidePanel>
      <PanelTab>Wave</PanelTab>
      <PanelBody>
        <Group>
          <Legend>View</Legend>
          <RadioRow>
            <RadioLabel>
              <Radio type="radio" name="cell" checked={cell === "single"} onChange={() => setCell("single")} />
              Single Cell
            </RadioLabel>
            <RadioLabel>
              <Radio type="radio" name="cell" checked={cell === "all"} onChange={() => setCell("all")} />
              All Cells
            </RadioLabel>
          </RadioRow>
          <ButtonRow>
            <PushButton aria-label="Previous cell"><CellArrow up /></PushButton>
            <PushButton aria-label="Next cell"><CellArrow /></PushButton>
          </ButtonRow>
        </Group>
        <Group>
          <Legend>Scaling</Legend>
          <Scaling>
            <ScaleField id="xdiv" label="X Division" value="" off />
            <ScaleField id="ydiv" label="Y Division" value="25.00" />
            <ScaleField id="yoff" label="Y Offset" value="50.00" />
            <ButtonRow>
              <PushButton>Fit X</PushButton>
              <PushButton disabled>Fit Y</PushButton>
              <PushButton $down>Auto Y</PushButton>
            </ButtonRow>
          </Scaling>
        </Group>
        <Group>
          <Legend>Measurement Cursors</Legend>
          <CursorBlock>
            <CursorField id="c1" mark="1" value="ki" x="75.500m" y=" 34.185" />
            <CursorField id="c2" mark="2" value="ki" x="21.494" y=" 16.616" />
            <CursorField id="c3" mark="" value="Cursor 2 - Cursor 1" x="21.418" y="-17.569" />
          </CursorBlock>
        </Group>
      </PanelBody>
    </SidePanel>
  );
}

export default function App() {
  return (
    <>
      <GlobalStyle />
      <Desktop>
        <TitleBar>
          <AppIcon />
          <Title>{"CircuitMaker - [C:\\Program Files\\...\\nyolcadik változat.CKT* 100%]"}</Title>
          <WindowButtons>
            <WindowButton aria-label="Minimize">
              <svg width="13" height="13"><path d="M2 9h6v3H2z" fill="#fff" /></svg>
            </WindowButton>
            <WindowButton aria-label="Restore">
              <svg width="13" height="13" fill="none" stroke="#fff">
                <path d="M4.500 4V1.500h7v6H9M4 2h8" />
                <path d="M1.500 5.500h7v6h-7zM1 6h8" />
              </svg>
            </WindowButton>
            <WindowButton $close aria-label="Close">
              <svg width="13" height="13"><path d="M2 2l9 9M11 2l-9 9" stroke="#fff" strokeWidth="2" /></svg>
            </WindowButton>
          </WindowButtons>
        </TitleBar>

        <MenuBar>{MENUS.map((m) => <MenuItem key={m}>{m}</MenuItem>)}</MenuBar>

        <ToolBar>
          {TOOL_GROUPS.map((group) => (
            <React.Fragment key={group.tools[0].icon}>
              {group.tools.map((t) => (
                <ToolButton key={t.icon} aria-label={t.label} $pressed={t.pressed}>
                  <svg width="24" height="24" viewBox="0 0 24 24">{ICONS[t.icon]}</svg>
                </ToolButton>
              ))}
              {group.space > 0 && <ToolSeparator $space={group.space} />}
            </React.Fragment>
          ))}
        </ToolBar>

        <Main>
          <WavePanel />
          <WorkArea>
            <SchematicPane>
              <Sheet><Schematic /></Sheet>
              <ScrollTrack $vertical>
                <ScrollButton aria-label="Scroll up"><Chevron turn={0} /></ScrollButton>
                <ScrollThumb $size="45px"><Grip turn={90} /></ScrollThumb>
                <ScrollSpace />
                <ScrollButton aria-label="Scroll down"><Chevron turn={180} /></ScrollButton>
              </ScrollTrack>
              <ScrollTrack>
                <ScrollButton aria-label="Scroll left"><Chevron turn={-90} /></ScrollButton>
                <ScrollThumb $size="30%"><Grip /></ScrollThumb>
                <ScrollSpace />
                <ScrollButton aria-label="Scroll right"><Chevron turn={90} /></ScrollButton>
              </ScrollTrack>
            </SchematicPane>
            <Splitter />
            <PlotPane>
              <PlotGutter>
                <GutterCell>
                  <svg width="8" height="16"><path d="M0 0v16l8-8z" /></svg>
                </GutterCell>
                <GutterCell />
              </PlotGutter>
              <PlotView><Plots /></PlotView>
            </PlotPane>
            <SheetTabs>
              <TabLine>
                <SheetTab $active $width={64}>AC Analysis</SheetTab>
                <SheetTab $width={83}>Operating Point</SheetTab>
                <SheetTab $width={97}>Transient Analysis</SheetTab>
              </TabLine>
            </SheetTabs>
          </WorkArea>
        </Main>

        <StatusBar>
          <StatusCell />
          <StatusCell />
        </StatusBar>

        <TaskBar>
          <StartButton><WindowsFlag />Start</StartButton>
          <TaskButton><AppIcon />CircuitMaker</TaskButton>
          <Language>HU</Language>
          <Tray>
            <svg width="16" height="16" viewBox="0 0 16 16">
              <path d="M2 12l8-3 4 3-8 3z" fill="#111" />
              <path d="M5 11l6-9 3 2-6 8z" fill="#58b848" />
              <path d="M5 11l3 1-5 1z" fill="#f0d040" />
            </svg>
            <svg width="16" height="16" viewBox="0 0 16 16">
              <path d="M8 1l6 2v5q-1 5-6 7q-5-2-6-7V3z" fill="#d83030" stroke="#f4d0d0" />
              <path d="M5.500 5.500l5 5M10.500 5.500l-5 5" stroke="#fff" strokeWidth="1.500" />
            </svg>
            <svg width="16" height="16" viewBox="0 0 16 16">
              <path d="M1 5h3l4-4v14l-4-4H1z" fill="#8c3c1c" stroke="#331" />
              <path d="M10 3q3 5 0 10M12 1q4 7 0 14" fill="none" stroke="#222" strokeWidth="1.500" />
            </svg>
            <svg width="16" height="16" viewBox="0 0 16 16">
              <circle cx="7" cy="7" r="5.500" fill="#b8bcc4" stroke="#555" />
              <circle cx="6" cy="6" r="2.500" fill="#667" />
              <path d="M10 14q4-2 4-6" fill="none" stroke="#eee" />
            </svg>
            <svg width="16" height="16" viewBox="0 0 16 16">
              <ellipse cx="8" cy="8" rx="5.500" ry="7" fill="#1020b0" />
              <path d="M5 5l6 6-3 3V2l3 3-6 6" fill="none" stroke="#c82040" strokeWidth="1.500" />
            </svg>
            <Clock>5:50</Clock>
          </Tray>
        </TaskBar>
      </Desktop>
    </>
  );
}
